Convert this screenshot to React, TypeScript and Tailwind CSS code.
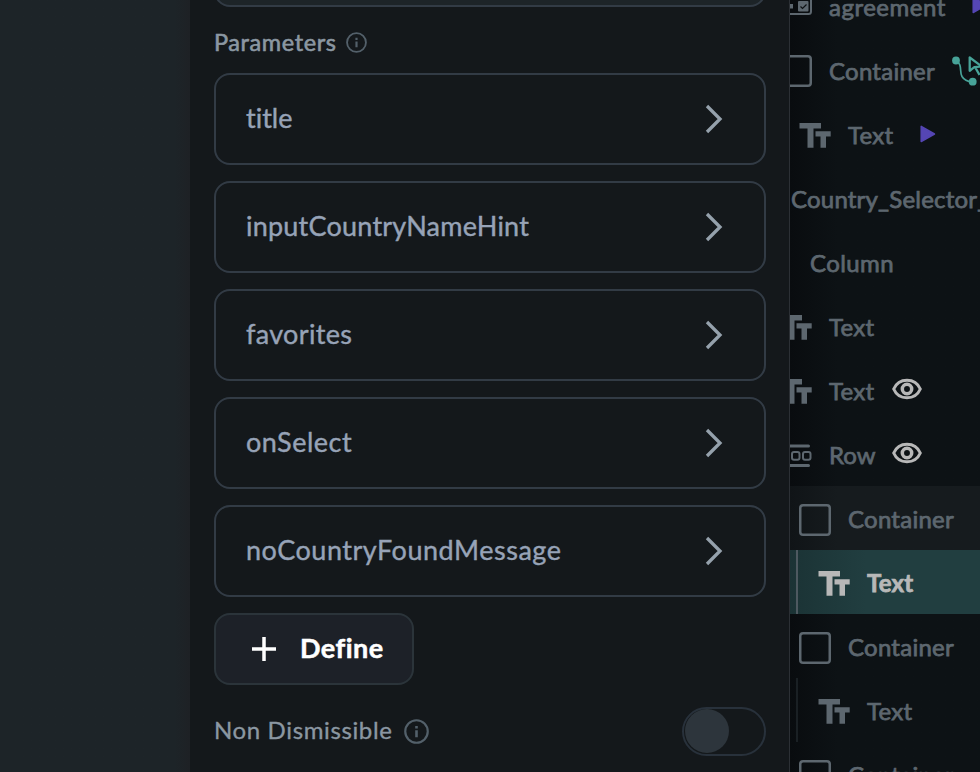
import type { ReactNode } from "react";

const parameters = [
  { name: "title", tracking: "tracking-[-0.01px]" },
  { name: "inputCountryNameHint", tracking: "tracking-[0.22px]" },
  { name: "favorites", tracking: "tracking-[0.35px]" },
  { name: "onSelect", tracking: "tracking-[0.5px]" },
  { name: "noCountryFoundMessage", tracking: "tracking-[0.52px]" },
];

function InfoIcon({ className }: { className: string }) {
  return (
    <svg viewBox="0 0 24 24" className={className} fill="none" stroke="currentColor" strokeWidth="2.1">
      <circle cx="12" cy="12" r="10.8" />
      <path d="M12 10.8v6.6M12 6.6v2.5" strokeWidth="2.5" />
    </svg>
  );
}

function TextIcon({ className = "" }: { className?: string }) {
  return (
    <svg viewBox="0 0 32 25" className={`h-[25px] w-8 shrink-0 ${className}`} fill="currentColor">
      <path d="M.5 0H22v5.500h-7.500V24.700H8.500V5.500H.5zM16.500 8.200H31.700v5.300H27v11.200h-5.500V13.500h-5z" />
    </svg>
  );
}

function BoxIcon({ className = "" }: { className?: string }) {
  return (
    <svg viewBox="0 0 32 32" className={`size-8 shrink-0 ${className}`} fill="none" stroke="currentColor" strokeWidth="2.500">
      <rect x="1.250" y="1.250" width="29.500" height="29.500" rx="2.800" />
    </svg>
  );
}

function RowIcon() {
  return (
    <svg viewBox="0 0 32 24" className="-ml-[10px] h-6 w-8 shrink-0" fill="none" stroke="currentColor">
      <path d="M2 2h26.500M2 21.500h26.500" strokeWidth="3" strokeLinecap="round" />
      <rect x="12" y="8" width="7.500" height="7.800" rx="2" strokeWidth="2" />
      <rect x="23" y="8" width="7.500" height="7.800" rx="2" strokeWidth="2" />
    </svg>
  );
}

function CheckboxTileIcon() {
  return (
    <svg viewBox="0 0 32 22" className="-mt-[8px] -ml-[10px] h-[22px] w-8 shrink-0" fill="none" stroke="currentColor">
      <rect x="1" y="1" width="30" height="20" rx="2.500" strokeWidth="2" />
      <rect x="5" y="11" width="8" height="4.500" fill="currentColor" stroke="none" />
      <rect x="18" y="8" width="10.500" height="10.500" rx="1" fill="currentColor" stroke="none" />
      <path d="M20.500 13.500l2 2 4-4" stroke="#0d1114" strokeWidth="1.200" />
    </svg>
  );
}

function EyeIcon({ className }: { className: string }) {
  return (
    <svg viewBox="0 0 30 22" className={`-mt-[6px] h-[22px] w-[30px] shrink-0 text-[#b8b8b8] ${className}`} fill="none" stroke="currentColor" strokeWidth="3">
      <path d="M1.700 11C4.200 5.200 9.200 2.200 15 2.200s10.800 3 13.300 8.800C25.800 16.800 20.800 19.800 15 19.800S4.200 16.800 1.700 11Z" />
      <circle cx="15" cy="11" r="4.700" strokeWidth="3.500" />
    </svg>
  );
}

function PlayIcon({ className }: { className: string }) {
  return (
    <svg viewBox="0 0 16 18" className={`h-[18px] w-4 shrink-0 text-[#5546b4] ${className}`} fill="currentColor" stroke="currentColor" strokeWidth="1.500" strokeLinejoin="round">
      <path d="M1.200 1.400v15.200L14.500 9z" />
    </svg>
  );
}

function ActionFlowIcon() {
  return (
    <svg viewBox="0 0 34 32" className="ml-[17px] h-8 w-[34px] shrink-0 text-[#47a398]" fill="none" stroke="currentColor" strokeWidth="2">
      <circle cx="4" cy="4.500" r="3.900" fill="currentColor" stroke="none" />
      <circle cx="20.700" cy="25.700" r="3.900" fill="currentColor" stroke="none" />
      <path d="M4 4.500C11 9 7 15 10 20.500Q13 25.500 20 25.700" strokeWidth="1.700" />
      <path d="M17.700 1.500v13.300l4.600-3.600 7.500-.8zM23 11l4.500 8" strokeWidth="2.300" strokeLinejoin="round" />
    </svg>
  );
}

function TreeRow({ className = "", children }: { className?: string; children: ReactNode }) {
  return <div className={`flex h-16 shrink-0 items-center whitespace-nowrap pt-[3px] ${className}`}>{children}</div>;
}

function Label({ className = "", children }: { className?: string; children: ReactNode }) {
  return <span className={`-mt-[2px] text-2xl leading-8 [-webkit-text-stroke:0.75px] ${className}`}>{children}</span>;
}

export default function App() {
  return (
    <div className="flex h-[772px] w-[980px] overflow-hidden bg-[#14181b] font-['Lato','Liberation_Sans',sans-serif]">
      <div className="w-[190px] shrink-0 bg-linear-to-r from-[#1d2428] from-92% to-[#1e2125]" />

      <main className="flex w-[600px] shrink-0 flex-col border-r border-[#2c3035] bg-[#14181b] pl-6 pr-[23px]">
        <div className="-mt-10 h-[47px] shrink-0 rounded-2xl border-2 border-[#323b45] bg-[#1d2428]" />
        <div className="flex h-[66px] shrink-0 items-center pt-1 text-[#8b97a2]">
          <span className="-mt-px text-[23.5px] leading-8 tracking-[0.6px] [-webkit-text-stroke:0.6px]">Parameters</span>
          <InfoIcon className="ml-[9px] size-[21px] text-[#53606a]" />
        </div>
        <div className="flex flex-col gap-4">
          {parameters.map((p) => (
            <div key={p.name} className="flex h-[92px] items-center justify-between rounded-2xl border-2 border-[#323b45] pl-[30px] pr-[40px]">
              <span className={`-mt-[2px] text-[27px] leading-9 text-[#97a3b7] [-webkit-text-stroke:0.4px] [font-variant-ligatures:none] ${p.tracking}`}>{p.name}</span>
              <svg viewBox="0 0 20 30" className="h-[30px] w-5" fill="none" stroke="#95a1ac" strokeWidth="3.300">
                <path d="M3 2l13 13L3 28" />
              </svg>
            </div>
          ))}
        </div>
        <button className="mt-4 flex h-[72px] w-[200px] shrink-0 items-center rounded-2xl border-2 border-[#2b343a] bg-[#1d2128] pl-9 text-white">
          <svg viewBox="0 0 24 24" className="size-6" stroke="currentColor" strokeWidth="3.500">
            <path d="M12 0v24M0 12h24" />
          </svg>
          <span className="-mt-[2px] ml-[24px] text-[27px] font-bold leading-9 tracking-[0.5px] [-webkit-text-stroke:0.5px]">Define</span>
        </button>
        <div className="mt-[21px] flex h-[50px] shrink-0 items-center text-[#8b97a2]">
          <span className="-mt-[3px] text-2xl leading-8 tracking-[0.63px] [-webkit-text-stroke:0.35px]">Non Dismissible</span>
          <InfoIcon className="ml-[11px] size-[25px] text-[#53606a]" />
          <span className="ml-auto flex h-[49px] w-[84px] items-center rounded-full border-2 border-[#28313b] pl-[1px]">
            <span className="size-[44px] rounded-full bg-[#2d353c]" />
          </span>
        </div>
      </main>

      <aside className="w-[190px] shrink-0 overflow-hidden bg-linear-to-r from-[#090c0f] to-[#0d1215] to-25% text-[#5d676f]">
        <div className="-mt-[26px] flex flex-col">
          <TreeRow>
            <CheckboxTileIcon />
            <Label className="ml-[17px] tracking-[0.5px]">agreement</Label>
            <PlayIcon className="-mt-[6px] ml-[26px]" />
          </TreeRow>
          <TreeRow>
            <BoxIcon className="-ml-[10px] -mt-[2px]" />
            <Label className="ml-[17px] tracking-[0.25px]">Container</Label>
            <ActionFlowIcon />
          </TreeRow>
          <TreeRow className="pl-[9px]">
            <TextIcon />
            <Label className="ml-[17px] tracking-[0.3px]">Text</Label>
            <PlayIcon className="-mt-1 ml-[26px]" />
          </TreeRow>
          <TreeRow className="pl-px">
            <Label className="tracking-[0.2px]">Country_Selector_Sheet</Label>
          </TreeRow>
          <TreeRow className="pl-5">
            <Label className="tracking-[0.4px]">Column</Label>
          </TreeRow>
          <TreeRow>
            <TextIcon className="-ml-[10px]" />
            <Label className="ml-[17px] tracking-[0.3px]">Text</Label>
          </TreeRow>
          <TreeRow>
            <TextIcon className="-ml-[10px]" />
            <Label className="ml-[17px] tracking-[0.3px]">Text</Label>
            <EyeIcon className="ml-[17px]" />
          </TreeRow>
          <TreeRow>
            <RowIcon />
            <Label className="ml-[17px]">Row</Label>
            <EyeIcon className="ml-[16px]" />
          </TreeRow>
          <TreeRow className="bg-linear-to-r from-[#101417] to-[#161b1e] to-25% pl-[9px]">
            <BoxIcon />
            <Label className="ml-[17px] tracking-[0.25px]">Container</Label>
          </TreeRow>
          <TreeRow className="bg-linear-to-r from-[#1b3335] to-[#213e40] to-40% pl-[6px] text-[#b8b8b8]">
            <span className="-mt-[3px] h-16 w-[2px] bg-[#4d5960]" />
            <TextIcon className="-mt-px ml-[20px]" />
            <Label className="ml-[17px] font-bold tracking-[0.2px]">Text</Label>
          </TreeRow>
          <TreeRow className="pl-[9px]">
            <BoxIcon />
            <Label className="ml-[17px] tracking-[0.25px]">Container</Label>
          </TreeRow>
          <TreeRow className="pl-[6px]">
            <span className="-mt-[3px] h-16 w-[2px] bg-[#1a2024]" />
            <TextIcon className="-mt-px ml-[20px]" />
            <Label className="ml-[17px] tracking-[0.3px]">Text</Label>
          </TreeRow>
          <TreeRow className="pl-[9px]">
            <BoxIcon />
            <Label className="ml-[17px] tracking-[0.25px]">Container</Label>
          </TreeRow>
        </div>
      </aside>
    </div>
  );
}
